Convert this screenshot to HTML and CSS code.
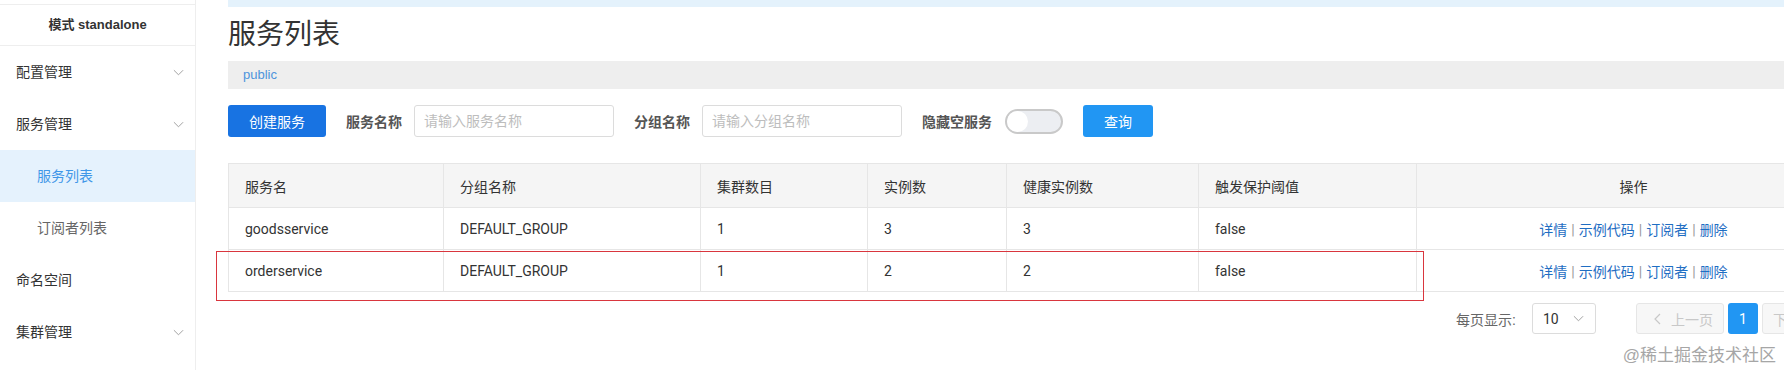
FILE: index.html
```html
<!DOCTYPE html>
<html lang="zh-CN">
<head>
    <meta charset="UTF-8">
    <meta name="viewport" content="width=device-width, initial-scale=1.0">
    <title>服务列表</title>
    <link rel="stylesheet" href="styles.css">
</head>
<body>
    <aside class="sidebar">
        <div class="sidebar-top"></div>
        <div class="modo">模式 standalone</div>
        <div class="menu">
            <div class="menu-item">配置管理 <svg class="chevron" viewBox="0 0 12 7"><path d="M1 1l5 5 5-5" /></svg></div>
            <div class="menu-item">服务管理 <svg class="chevron" viewBox="0 0 12 7"><path d="M1 1l5 5 5-5" /></svg></div>
            <div class="menu-item sub active">服务列表</div>
            <div class="menu-item sub">订阅者列表</div>
            <div class="menu-item">命名空间</div>
            <div class="menu-item">集群管理 <svg class="chevron" viewBox="0 0 12 7"><path d="M1 1l5 5 5-5" /></svg></div>
        </div>
    </aside>

    <main class="contenido">
        <div class="aviso"></div>
        <h1 class="titulo">服务列表</h1>
        <div class="namespace">public</div>

        <!-- Barra de filtros -->
        <div class="filtros">
            <button class="btn btn-crear">创建服务</button>
            <label class="etiqueta">服务名称</label>
            <input class="campo" type="text" placeholder="请输入服务名称">
            <label class="etiqueta">分组名称</label>
            <input class="campo" type="text" placeholder="请输入分组名称">
            <label class="etiqueta">隐藏空服务</label>
            <span class="switch"><span class="knob"></span></span>
            <button class="btn btn-consultar">查询</button>
        </div>

        <!-- Tabla de servicios -->
        <table class="tabla">
            <colgroup>
                <col style="width: 215px">
                <col style="width: 257px">
                <col style="width: 167px">
                <col style="width: 139px">
                <col style="width: 192px">
                <col style="width: 218px">
                <col style="width: 434px">
            </colgroup>
            <thead>
                <tr>
                    <th>服务名</th>
                    <th>分组名称</th>
                    <th>集群数目</th>
                    <th>实例数</th>
                    <th>健康实例数</th>
                    <th>触发保护阈值</th>
                    <th class="centro">操作</th>
                </tr>
            </thead>
            <tbody>
                <tr>
                    <td>goodsservice</td>
                    <td>DEFAULT_GROUP</td>
                    <td>1</td>
                    <td>3</td>
                    <td>3</td>
                    <td>false</td>
                    <td class="centro acciones"><a>详情</a><span>|</span><a>示例代码</a><span>|</span><a>订阅者</a><span>|</span><a>删除</a></td>
                </tr>
                <tr>
                    <td>orderservice</td>
                    <td>DEFAULT_GROUP</td>
                    <td>1</td>
                    <td>2</td>
                    <td>2</td>
                    <td>false</td>
                    <td class="centro acciones"><a>详情</a><span>|</span><a>示例代码</a><span>|</span><a>订阅者</a><span>|</span><a>删除</a></td>
                </tr>
            </tbody>
        </table>

        <!-- Paginación -->
        <div class="paginacion">
            <span class="por-pagina">每页显示:</span>
            <span class="selector">10 <svg class="chevron" viewBox="0 0 12 7"><path d="M1 1l5 5 5-5" /></svg></span>
            <span class="pag-btn anterior"><svg class="flecha" viewBox="0 0 7 12"><path d="M6 1L1 6l5 5" /></svg>上一页</span>
            <span class="pag-num">1</span>
            <span class="pag-btn siguiente">下一页<svg class="flecha" viewBox="0 0 7 12"><path d="M1 1l5 5-5 5" /></svg></span>
        </div>
    </main>

    <div class="marca-roja"></div>
    <div class="watermark">@稀土掘金技术社区</div>
</body>
</html>
```

FILE: styles.css
```css
body {
    font-family: 'Liberation Sans', 'Noto Sans CJK SC', sans-serif;
    margin: 0;
    padding: 0;
    background-color: #fff;
    color: #333;
    display: flex;
    width: 1850px;
    height: 370px;
    overflow: hidden;
    font-size: 14px;
}

html {
    overflow: hidden;
}

.sidebar {
    width: 195px;
    flex-shrink: 0;
    border-right: 1px solid #eeeeee;
    height: 370px;
}

.sidebar-top {
    height: 4px;
    border-bottom: 1px solid #eeeeee;
}

.modo {
    height: 40px;
    line-height: 40px;
    text-align: center;
    font-size: 13px;
    font-weight: bold;
    color: #333;
    border-bottom: 1px solid #eeeeee;
}

.menu-item {
    height: 52px;
    line-height: 52px;
    padding-left: 16px;
    padding-right: 11px;
    display: flex;
    align-items: center;
    justify-content: space-between;
    color: #333;
    font-size: 14px;
}

.menu-item.sub {
    padding-left: 37px;
    color: #666;
}

.menu-item.active {
    background-color: #e5f2fd;
    color: #3f97e8;
}

.chevron {
    width: 11px;
    height: 7px;
    fill: none;
    stroke: #999;
    stroke-width: 1;
}

.contenido {
    margin-left: 32px;
    width: 1622px;
    flex-shrink: 0;
}

.aviso {
    height: 7px;
    background-color: #e4f2fc;
}

.titulo {
    margin: 0;
    height: 54px;
    padding-top: 4px;
    box-sizing: border-box;
    line-height: 48px;
    font-size: 28px;
    font-weight: normal;
    color: #333;
}

.namespace {
    height: 28px;
    line-height: 28px;
    background-color: #eeeeee;
    padding-left: 15px;
    color: #4d94dc;
    font-size: 13px;
}

.filtros {
    display: flex;
    align-items: center;
    margin-top: 16px;
    height: 32px;
}

.btn {
    height: 32px;
    border: none;
    border-radius: 3px;
    color: white;
    font-family: inherit;
    font-size: 14px;
    cursor: pointer;
}

.btn-crear {
    width: 98px;
    background-color: #1873e2;
}

.btn-consultar {
    width: 70px;
    margin-left: 20px;
    background-color: #2196f3;
}

.etiqueta {
    font-weight: bold;
    color: #555;
    margin-left: 20px;
    margin-right: 12px;
}

.campo {
    width: 200px;
    height: 32px;
    box-sizing: border-box;
    border: 1px solid #dcdcdc;
    border-radius: 3px;
    padding: 0 9px;
    font-family: inherit;
    font-size: 14px;
}

.campo::placeholder {
    color: #bdbdbd;
}

.switch {
    width: 58px;
    height: 25px;
    box-sizing: border-box;
    border: 2px solid #c9c9c9;
    border-radius: 13px;
    background-color: #eceef2;
    margin-left: 1px;
    display: flex;
    align-items: center;
}

.knob {
    width: 21px;
    height: 21px;
    border-radius: 50%;
    background-color: #fff;
}

.tabla {
    margin-top: 26px;
    border-collapse: collapse;
    table-layout: fixed;
    width: 1622px;
    font-family: Roboto, 'Noto Sans CJK SC', sans-serif;
    font-size: 14px;
}

.tabla th,
.tabla td {
    border: 1px solid #e6e6e6;
    padding: 0 0 0 16px;
    text-align: left;
    color: #333;
}

.tabla th {
    height: 43px;
    background-color: #f5f5f5;
    font-weight: normal;
}

.tabla td {
    height: 41px;
}

.tabla .centro {
    text-align: center;
    padding: 0;
}

.acciones a {
    color: #1f6ec3;
}

.acciones span {
    color: #999;
    margin: 0 4px;
}

.paginacion {
    display: flex;
    justify-content: flex-end;
    align-items: center;
    margin-top: 11px;
    height: 31px;
}

.por-pagina {
    color: #666;
    margin-right: 16px;
}

.selector {
    width: 64px;
    height: 31px;
    box-sizing: border-box;
    border: 1px solid #dcdcdc;
    border-radius: 3px;
    display: flex;
    align-items: center;
    justify-content: space-between;
    padding: 0 11px 0 10px;
    margin-right: 40px;
    font-family: Roboto, sans-serif;
}

.pag-btn {
    width: 88px;
    height: 31px;
    box-sizing: border-box;
    border: 1px solid #e6e6e6;
    border-radius: 3px;
    background-color: #f7f7f7;
    display: flex;
    align-items: center;
    color: #c8c8c8;
}

.pag-btn.anterior {
    justify-content: flex-end;
    padding-right: 10px;
}

.pag-btn.siguiente {
    padding-left: 10px;
}

.flecha {
    width: 7px;
    height: 12px;
    fill: none;
    stroke: #c8c8c8;
    stroke-width: 1.2;
    margin: 0 10px;
}

.pag-num {
    width: 30px;
    height: 31px;
    border-radius: 3px;
    background-color: #2196f3;
    color: white;
    display: flex;
    align-items: center;
    justify-content: center;
    margin: 0 4px;
    font-family: Roboto, sans-serif;
}

.marca-roja {
    position: absolute;
    left: 216px;
    top: 251px;
    width: 1206px;
    height: 48px;
    border: 1px solid #d9363e;
}

.watermark {
    position: absolute;
    right: 8px;
    top: 341px;
    font-size: 17px;
    color: #a6a6a6;
    text-shadow: 0 0 2px #fff;
}
```
